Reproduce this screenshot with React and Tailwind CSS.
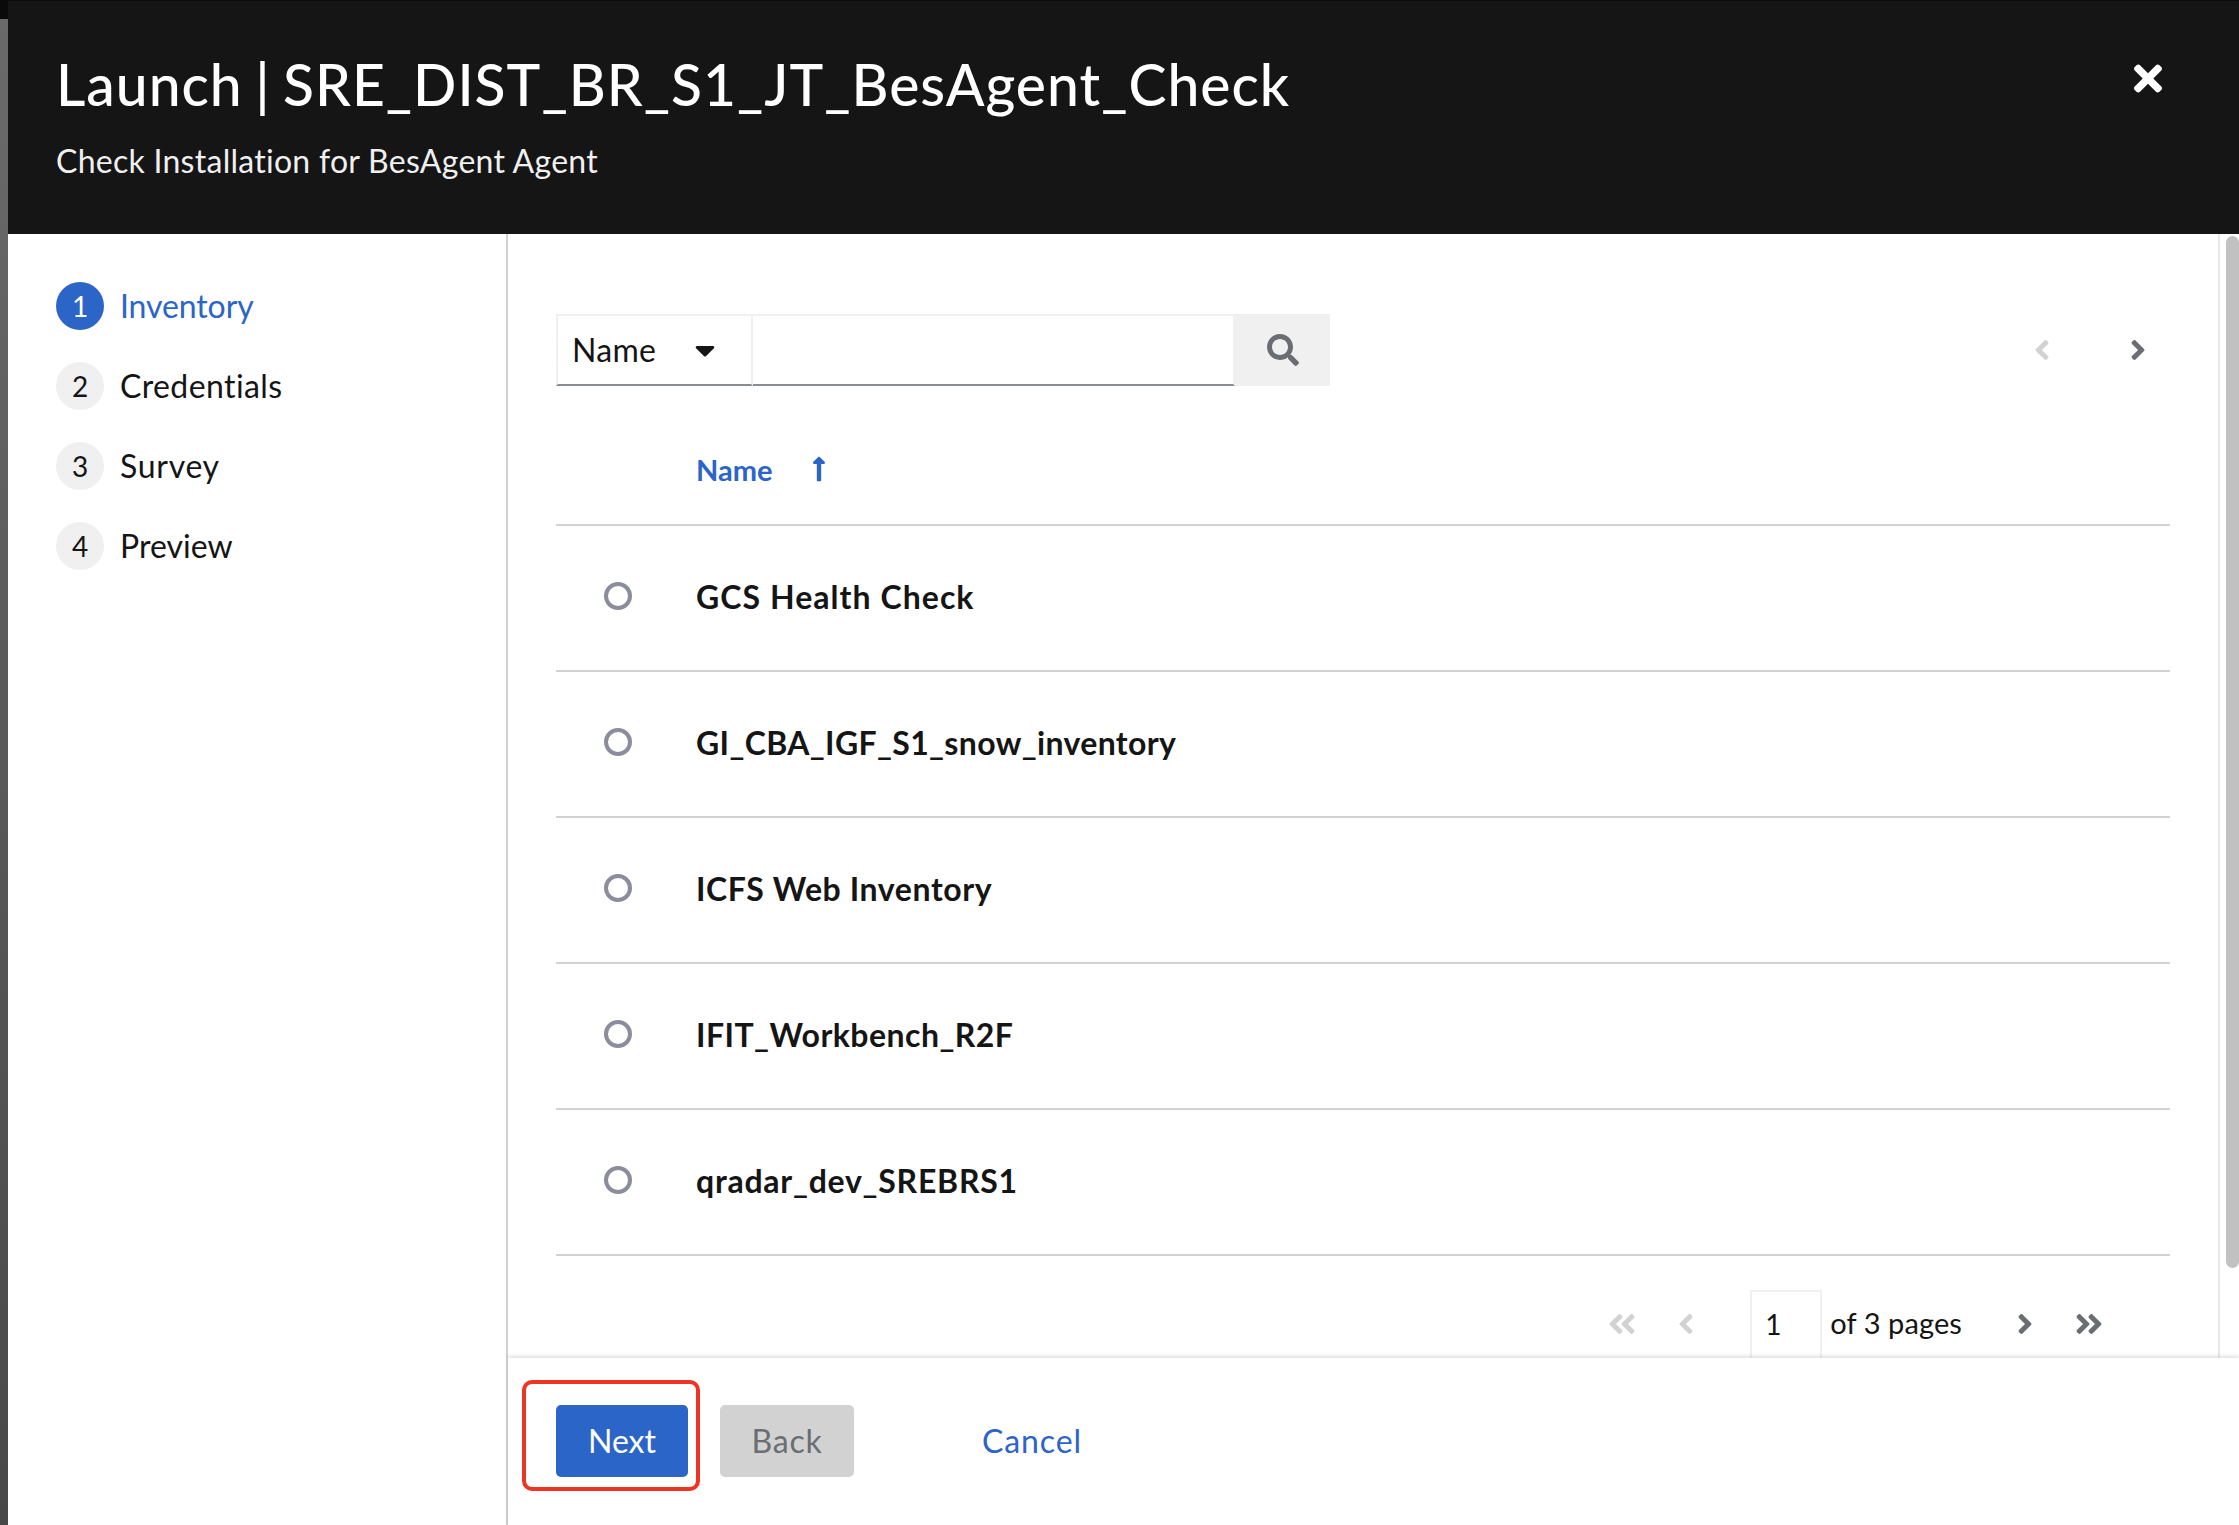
import React from "react";
import { FaSearch, FaAngleLeft, FaAngleRight, FaAngleDoubleLeft, FaAngleDoubleRight, FaTimes, FaLongArrowAltUp, FaCaretDown } from "react-icons/fa";

const steps = [
  { n: 1, label: "Inventory", active: true, track: "tracking-[-0.1px]" },
  { n: 2, label: "Credentials", track: "tracking-[0.4px]" },
  { n: 3, label: "Survey", track: "tracking-[0.7px]" },
  { n: 4, label: "Preview", track: "tracking-[0px]" },
];
const rows = [
  { name: "GCS Health Check", track: "tracking-[1.05px]" },
  { name: "GI_CBA_IGF_S1_snow_inventory", track: "tracking-[0.35px]" },
  { name: "ICFS Web Inventory", track: "tracking-[0.6px]" },
  { name: "IFIT_Workbench_R2F", track: "tracking-[0.45px]" },
  { name: "qradar_dev_SREBRS1", track: "tracking-[0.75px]" },
];

function Step({ n, label, active, track }) {
  return (
    <div className="flex items-center h-12 gap-4">
      <div className={active ? "w-12 h-12 rounded-full flex items-center justify-center text-[28px] bg-[#2b65c8] text-white" : "w-12 h-12 rounded-full flex items-center justify-center text-[28px] bg-[#f0f0f0] text-[#151515]"}>{n}</div>
      <span className={`text-[32px] leading-none ${track} ${active ? "text-[#2b65c8]" : "text-[#151515]"}`}>{label}</span>
    </div>
  );
}

function Row({ name, track }) {
  return (
    <div className="h-[146px] flex items-center border-b-2 border-[#d2d2d2]">
      <div className="w-7 h-7 ml-[48px] rounded-full border-4 border-[#8b8d9c] mb-1" />
      <span className={`ml-[64px] mb-[2px] text-[32px] font-bold text-[#151515] leading-none ${track}`}>{name}</span>
    </div>
  );
}

export default function App() {
  return (
    <div className="flex w-full h-[1525px] overflow-hidden bg-white font-[Lato,sans-serif] [font-variant-ligatures:none]">
      <div className="w-2 flex flex-col">
        <div className="h-[19px] bg-[#0a0a0a]" />
        <div className="flex-1 bg-gradient-to-b from-[#6a6a6a] to-[#484848]" />
      </div>
      <div className="flex-1 flex flex-col relative">
        <header className="h-[234px] bg-[#151515] text-white flex justify-between pl-12 pr-[77px] border-t border-[#0a0a0a]">
          <div className="flex flex-col">
            <h1 className="mt-[47px] text-[57px] leading-[72px] font-medium tracking-[1px] [word-spacing:-3px]">Launch | SRE_DIST_BR_S1_JT_BesAgent_Check</h1>
            <p className="mt-[19px] text-[32px] leading-[44px] tracking-[0.27px] text-[#f0f0f0]">Check Installation for BesAgent Agent</p>
          </div>
          <FaTimes className="w-7 h-[41px] mt-[57px]" />
        </header>
        <div className="flex-1 flex min-h-0">
          <aside className="w-[500px] border-r-2 border-[#d2d2d2] pl-12 pt-12 flex flex-col gap-8">
            {steps.map((s) => <Step key={s.n} {...s} />)}
          </aside>
          <div className="flex-1 flex flex-col min-w-0">
            <div className="h-[1124px] flex min-h-0">
              <main className="flex-1 min-w-0 pl-12 pr-12 pt-20 overflow-hidden">
                <div className="flex justify-between items-center h-[72px]">
                  <div className="flex h-[72px]">
                    <div className="w-[197px] flex items-center justify-between pl-[14px] pr-[36px] border-2 border-[#f0f0f0] border-b-[#8a8d90]">
                      <span className="text-[32px] leading-none tracking-[0.3px] text-[#151515]">Name</span>
                      <FaCaretDown className="w-[20px] h-[32px] text-[#151515]" />
                    </div>
                    <div className="w-[482px] border-2 border-l-0 border-[#f0f0f0] border-b-[#8a8d90]" />
                    <div className="w-[95px] bg-[#f0f0f0] flex items-center justify-center">
                      <FaSearch className="w-8 h-8 text-[#6a6e73]" />
                    </div>
                  </div>
                  <div className="flex items-center gap-[80px] pr-[24px]">
                    <FaAngleLeft className="w-4 h-8 text-[#d2d2d2]" />
                    <FaAngleRight className="w-4 h-8 text-[#6a6e73]" />
                  </div>
                </div>
                <div className="h-[140px] flex items-center border-b-2 border-[#d2d2d2] pl-[140px]">
                  <span className="mt-[28px] text-[29px] font-bold text-[#2b65c8] leading-none">Name</span>
                  <FaLongArrowAltUp className="ml-[39px] mt-[28px] w-[16px] h-[28px] text-[#2b65c8]" />
                </div>
                {rows.map((r) => <Row key={r.name} {...r} />)}
                <div className="flex justify-end items-start mt-[34px] pr-[67px]">
                  <FaAngleDoubleLeft className="w-7 h-8 mt-[18px] text-[#d2d2d2]" />
                  <FaAngleLeft className="w-4 h-8 mt-[18px] ml-[42px] text-[#d2d2d2]" />
                  <div className="w-[72px] h-[90px] ml-[56px] border-2 border-[#f0f0f0] pl-[13px] pt-[18px] text-[28px] leading-none text-[#151515]">1</div>
                  <span className="ml-[8px] mt-[18px] text-[29px] leading-none tracking-[0.1px] text-[#151515]">of 3 pages</span>
                  <FaAngleRight className="w-4 h-8 mt-[18px] ml-[55px] text-[#6a6e73]" />
                  <FaAngleDoubleRight className="w-7 h-8 mt-[18px] ml-[42px] text-[#6a6e73]" />
                </div>
              </main>
              <div className="w-[21px] border-l-2 border-[#e8e8e8] pl-[6px] pt-[2px]">
                <div className="w-[13px] h-[1032px] bg-[#c1c1c1] rounded-t-[8px] rounded-b-[8px]" />
              </div>
            </div>
            <footer className="flex-1 flex items-start pl-12 pt-[47px] bg-white relative shadow-[0_-2px_4px_rgba(0,0,0,0.12)]">
              <button className="w-[132px] h-[72px] rounded-[5px] bg-[#2b65c8] text-white text-[32px]">Next</button>
              <button className="w-[134px] h-[72px] ml-[32px] rounded-[5px] bg-[#d2d2d2] text-[#6a6e73] text-[32px] tracking-[0.8px]">Back</button>
              <button className="ml-[128px] h-[72px] text-[#2b65c8] text-[32px] tracking-[0.9px]">Cancel</button>
              <div className="absolute left-[14px] top-[22px] w-[178px] h-[111px] rounded-[10px] border-4 border-[#ee3524]" />
            </footer>
          </div>
        </div>
      </div>
    </div>
  );
}
